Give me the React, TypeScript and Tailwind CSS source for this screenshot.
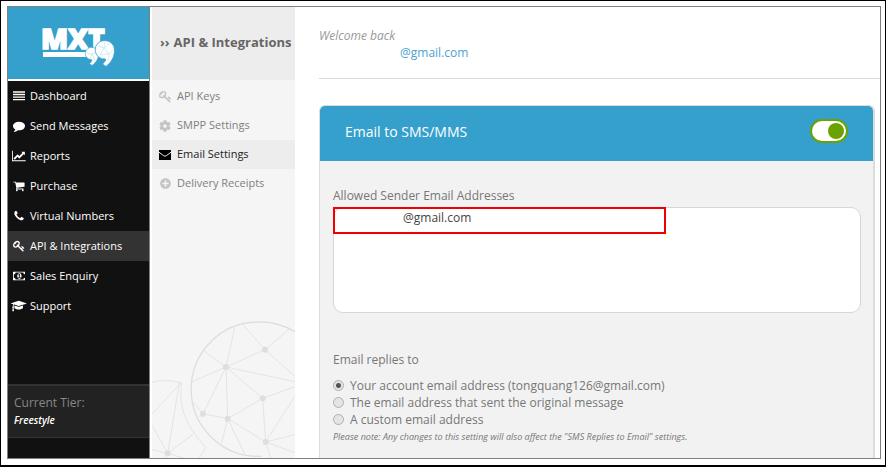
import React, { useState } from 'react';
import { FaCog, FaPlusCircle } from 'react-icons/fa';

const paths = {
  comment: 'M1792 896q0 174-120 321.5t-326 233-450 85.5q-70 0-145-8-198 175-460 242-49 14-114 22-17 2-30.5-9t-17.5-29v-1q-3-4-.5-12t2-10 4.5-9.5l6-9 7-8.5 8-9q7-8 31-34.5t34.5-38 31-39.5 32.5-51 27-59 26-76q-157-89-247.5-220t-90.5-281q0-130 71-248.5t191-204.5 286-136.5 348-50.5q244 0 450 85.5t326 233 120 321.5z',
  chart: 'M2048 1536v128h-2048v-1536h128v1408h1920zm-128-1248v435q0 21-19.5 29.5t-35.5-7.5l-121-121-633 633q-10 10-23 10t-23-10l-233-233-416 416-192-192 585-585q10-10 23-10t23 10l233 233 464-464-121-121q-16-16-7.5-35.5t29.5-19.5h435q14 0 23 9t9 23z',
  cart: 'M704 1536q0 52-38 90t-90 38-90-38-38-90 38-90 90-38 90 38 38 90zm896 0q0 52-38 90t-90 38-90-38-38-90 38-90 90-38 90 38 38 90zm128-1088v512q0 24-16.5 42.5t-40.5 21.5l-1044 122q13 60 13 70 0 16-24 64h920q26 0 45 19t19 45-19 45-45 19h-1024q-26 0-45-19t-19-45q0-11 8-31.5t16-36 21.5-40 15.5-29.5l-177-823h-204q-26 0-45-19t-19-45 19-45 45-19h256q16 0 28.5 6.5t19.5 15.5 13 24.5 8 26 5.5 29.5 4.5 26h1201q26 0 45 19t19 45z',
  phone: 'M1600 1240q0 27-10 70.5t-21 68.5q-21 50-122 106-94 51-186 51-27 0-53-3.5t-57.5-12.5-47-14.5-55.5-20.5-49-18q-98-35-175-83-127-79-264-216t-216-264q-48-77-83-175-3-9-18-49t-20.5-55.5-14.5-47-12.5-57.5-3.5-53q0-92 51-186 56-101 106-122 25-11 68.5-21t70.5-10q14 0 21 3 18 6 53 76 11 19 30 54t35 63.5 31 53.5q3 4 17.5 25t21.5 35.5 7 28.5q0 20-28.5 50t-62 55-62 53-28.5 46q0 9 5 22.5t8.5 20.5 14 24 11.5 19q76 137 174 235t235 174q2 1 19 11.5t24 14 20.5 8.5 22.5 5q18 0 46-28.5t53-62 55-62 50-28.5q14 0 28.5 7t35.5 21.5 25 17.5q25 15 53.5 31t63.5 35 54 30q70 35 76 53 3 7 3 21z',
  key: 'M832 512q0-80-56-136t-136-56-136 56-56 136q0 42 19 83-41-19-83-19-80 0-136 56t-56 136 56 136 136 56 136-56 56-136q0-42-19-83 41 19 83 19 80 0 136-56t56-136zm851 704q0 17-49 66t-66 49q-9 0-28.5-16t-36.5-33-38.5-40-24.5-26l-96 96 220 220q28 28 28 68 0 42-39 81t-81 39q-40 0-68-28l-671-671q-176 131-365 131-163 0-265.5-102.5t-102.5-265.5q0-160 95-313t248-248 313-95q163 0 265.5 102.5t102.5 265.5q0 189-131 365l355 355 96-96q-3-3-26-24.5t-40-38.5-33-36.5-16-28.5q0-17 49-66t66-49q13 0 23 10 6 6 46 44.5t82 79.5 86.5 86 73 78 28.5 41z',
  money: 'M768 1152h384v-96h-128v-448h-114l-148 137 77 80q42-37 55-57h2v288h-128v96zm512-256q0 70-21 142t-59.5 134-101.5 101-138 39-138-39-101.5-101-59.5-134-21-142 21-142 59.5-134 101.5-101 138-39 138 39 101.5 101 59.5 134 21 142zm512 256v-512q-106 0-181-75t-75-181h-1152q0 106-75 181t-181 75v512q106 0 181 75t75 181h1152q0-106 75-181t181-75zm128-832v1152q0 26-19 45t-45 19h-1792q-26 0-45-19t-19-45v-1152q0-26 19-45t45-19h1792q26 0 45 19t19 45z',
  cap: 'M1774 836l18 316q4 69-82 128t-235 93.5-323 34.5-323-34.5-235-93.5-82-128l18-316 574 181q22 7 48 7t48-7zm530-324q0 23-22 31l-1120 352q-4 1-10 1t-10-1l-652-206q-43 34-71 111.5t-34 178.5q63 36 63 109 0 69-58 107l58 433q2 14-8 25-9 11-24 11h-192q-15 0-24-11-10-11-8-25l58-433q-58-38-58-107 0-73 65-111 11-207 98-330l-333-104q-22-8-22-31t22-31l1120-352q4-1 10-1t10 1l1120 352q22 8 22 31z',
  bars: 'M0 192h1792v200h-1792zM0 576h1792v200h-1792zM0 960h1792v200h-1792zM0 1344h1792v200h-1792z',
};

function Glyph({ d, w = 1792, className }: { d: string; w?: number; className: string }) {
  return (
    <svg viewBox={`0 0 ${w} 1792`} fill="currentColor" className={className} aria-hidden="true">
      <path d={d} />
    </svg>
  );
}

const navItems = [
  { name: 'Dashboard', d: paths.bars, w: 1792 },
  { name: 'Send Messages', d: paths.comment, w: 1792 },
  { name: 'Reports', d: paths.chart, w: 2048 },
  { name: 'Purchase', d: paths.cart, w: 1792 },
  { name: 'Virtual Numbers', d: paths.phone, w: 1792 },
  { name: 'API & Integrations', d: paths.key, w: 1792 },
  { name: 'Sales Enquiry', d: paths.money, w: 1920 },
  { name: 'Support', d: paths.cap, w: 2304 },
];

const subItems = [
  { name: 'API Keys', icon: <Glyph d={paths.key} className="w-[13px] h-[13px]" /> },
  { name: 'SMPP Settings', icon: <FaCog size={12} /> },
  { name: 'Email Settings', icon: <EnvelopeIcon /> },
  { name: 'Delivery Receipts', icon: <FaPlusCircle size={11} /> },
];

const replyOptions = [
  'Your account email address (tongquang126@gmail.com)',
  'The email address that sent the original message',
  'A custom email address',
];

function EnvelopeIcon() {
  return (
    <svg viewBox="0 0 12 10" className="w-3 h-[10px]" aria-hidden="true">
      <rect width="12" height="10" fill="#000" />
      <path d="M0 2.2 4.6 5.7Q6 6.7 7.4 5.7L12 2.2" fill="none" stroke="#eee" strokeWidth="1" />
    </svg>
  );
}

function Logo() {
  return (
    <svg viewBox="0 -8 76 50" className="w-[76px] h-[50px]" role="img" aria-label="MXT">
      <text x="0" y="23" fill="#fff" stroke="#fff" strokeWidth="1.4" fontSize="28" fontWeight="800" fontFamily="Open Sans, sans-serif">MXT</text>
      <rect x="2" y="26" width="43" height="5" fill="#fff" />
      <path d="M52 21.500a6 6 0 0 1 5.500 6.500c0 5-2.500 8.500-6.500 11.500l-2.500-1.800c1.500-1.300 2.300-2.600 2.400-4A6.200 6.200 0 1 1 52 21.500z" fill="#fff" stroke="#35a0cb" strokeWidth=".6" />
      <path d="M64 14.500a9.400 9.400 0 0 1 9.500 9.500c0 7.500-3.500 12.500-8.500 16.500l-3.500-2.500c2.400-2 3.200-3.500 3.200-5A9.300 9.300 0 1 1 64 14.500z" fill="#fff" stroke="#35a0cb" strokeWidth=".8" />
      <path d="M57 20l6 2 6-5M63 22l-4 7M63 22l5 6 5-5M59 29l9-1-1 7M63 22l1-7M46 27l5 1 4-2M51 28l-2 5M51 28l3 6" fill="none" stroke="#a9d8ea" strokeWidth=".5" />
    </svg>
  );
}

// network bubbles at the foot of the secondary menu
function NetworkArt() {
  const nodes = [[345, 149], [228, 201], [338, 295], [159, 341], [233, 356], [347, 426], [53, 460]];
  return (
    <svg viewBox="6 0 429 474" className="w-full shrink-0" aria-hidden="true">
      <g fill="none" stroke="#e4e4e4" strokeWidth="3">
        <path d="M435 95A204 204 0 0 0 325 66A201.500 201.500 0 0 0 325 469H334" stroke="#dedede" strokeWidth="4" />
        <path d="M6 247Q50 235 95 249C84 315 105 375 167 442L148 474" />
        <path d="M254 82 228 201 345 149 278 73M345 149 418 87M345 149 435 230M228 201 435 245M228 201 162 153M228 201 126 245M228 201 159 341 233 356 228 201 338 295 435 260M233 356 338 295 347 426 233 356M347 426 435 288M347 426 435 404M347 426 435 458M347 426 362 474M233 356 214 433M233 356 285 464M159 341 130 308M159 341 148 352" />
        <path d="M92 249 6 342M88 249 53 460 129 403M53 460 6 375M53 460 6 449M53 460 48 474M53 460 100 474" />
      </g>
      {nodes.map(([x, y]) => (
        <circle key={`${x}-${y}`} cx={x} cy={y} r="9" fill="#dedede" />
      ))}
    </svg>
  );
}

export default function App() {
  const [enabled, setEnabled] = useState(true);
  const [reply, setReply] = useState(0);
  const [senders, setSenders] = useState('@gmail.com');

  return (
    <div className="h-screen border border-b-2 border-black bg-white pt-[5px] pl-[6px] pr-1 pb-[6px] font-['Open_Sans',sans-serif]">
      <div className="flex h-full overflow-hidden border border-[#808080] bg-white">
        <aside className="flex w-[142px] shrink-0 flex-col border-r border-[#808080] bg-[#111]">
          <div className="flex h-[74px] shrink-0 items-center justify-center border-b-2 border-white bg-[#35a0cb]">
            <Logo />
          </div>
          <nav>
            {navItems.map((item, index) => (
              <a
                key={item.name}
                href="#"
                className={`flex h-[30px] items-center gap-1 pl-1 text-[11px] text-white ${index === 5 ? 'bg-[#333]' : ''}`}
              >
                <span className="flex w-[14px] shrink-0 justify-center">
                  <Glyph d={item.d} w={item.w} className="h-3 shrink-0" />
                </span>
                <span className="whitespace-nowrap">{item.name}</span>
              </a>
            ))}
          </nav>
          <div className="mt-auto mb-5 h-[54px] shrink-0 border-t-2 border-b border-[#333] bg-[#222] pt-2 pl-[6px]">
            <p className="text-[12px] leading-[18px] text-[#888]">Current Tier:</p>
            <p className="text-[10px] leading-4 font-semibold text-white italic">Freestyle</p>
          </div>
        </aside>

        <aside className="ml-[2px] flex w-[143px] shrink-0 flex-col justify-between bg-[#f5f5f5]">
          <div>
            <h1 className="flex h-[73px] items-center gap-1 bg-[#ededed] pb-[2px] pl-2 text-[13px] font-bold whitespace-nowrap text-[#666]">
              <span>››</span>
              <span>API & Integrations</span>
            </h1>
            <nav className="pt-[2px]">
              {subItems.map((item, index) => (
                <a
                  key={item.name}
                  href="#"
                  className={`flex h-[29px] items-center gap-[5px] pl-[6px] text-[11px] ${index === 2 ? 'bg-[#ededed] text-[#222]' : 'text-[#808080]'}`}
                >
                  <span className={`flex w-[14px] shrink-0 justify-center ${index === 2 ? '' : 'text-[#c4c4c4]'}`}>{item.icon}</span>
                  <span className="whitespace-nowrap">{item.name}</span>
                </a>
              ))}
            </nav>
          </div>
          <NetworkArt />
        </aside>

        <main className="flex min-w-0 flex-1 flex-col pl-6">
          <header className="h-[72px] shrink-0 border-b border-[#d9d9d9] pt-5">
            <p className="text-[12px] leading-[17px] text-[#999] italic">Welcome back</p>
            <a href="#" className="ml-[81px] block text-[12px] leading-[17px] text-[#4aa3cf]">@gmail.com</a>
          </header>

          <section className="mt-[26px] mr-[5px] flex-1 rounded-t-md border border-r-2 border-b-0 border-[#dcdcdc] bg-[#f2f2f2]">
            <div className="flex h-[55px] items-center justify-between rounded-t-[5px] bg-[#35a0cb] pr-[25px] pb-[5px] pl-[25px]">
              <h2 className="text-[14px] text-white">Email to SMS/MMS</h2>
              <button
                type="button"
                role="switch"
                aria-checked={enabled}
                aria-label="Email to SMS/MMS"
                onClick={() => setEnabled(!enabled)}
                className={`flex h-6 w-[38px] items-center rounded-full border-2 border-[#6aa300] bg-white px-[2px] ${enabled ? 'justify-end' : 'justify-start'}`}
              >
                <span className="h-4 w-4 rounded-full bg-[#6aa300]" />
              </button>
            </div>

            <div className="pt-6 pr-3 pl-[13px] text-[12px] text-[#777]">
              <label htmlFor="senders" className="block leading-[22px]">Allowed Sender Email Addresses</label>
              <div className="relative">
                <textarea
                  id="senders"
                  value={senders}
                  onChange={(e) => setSenders(e.target.value)}
                  className="block h-[106px] w-full resize-none rounded-[10px] border border-[#d6d6d6] bg-white pl-[69px] text-[12px] leading-5 text-[#444] outline-none"
                />
                <div className="pointer-events-none absolute top-0 left-0 h-[27px] w-[333px] border-2 border-[#f00000]" />
              </div>

              <fieldset className="mt-9">
                <legend className="leading-[22px]">Email replies to</legend>
                <div className="pt-[6px]">
                  {replyOptions.map((text, index) => (
                    <label key={text} className="flex h-[17px] items-center gap-[6px] whitespace-nowrap">
                      <input
                        type="radio"
                        name="reply"
                        checked={reply === index}
                        onChange={() => setReply(index)}
                        className="h-[11px] w-[11px] shrink-0 appearance-none rounded-full border border-[#b0b0b0] bg-[#e4e4e4] checked:bg-[radial-gradient(circle,#555_0_2px,#e4e4e4_3px)]"
                      />
                      <span>{text}</span>
                    </label>
                  ))}
                </div>
                <p className="text-[9px] leading-[17px] whitespace-nowrap italic">
                  Please note: Any changes to this setting will also affect the "SMS Replies to Email" settings.
                </p>
              </fieldset>
            </div>
          </section>
        </main>
      </div>
    </div>
  );
}
